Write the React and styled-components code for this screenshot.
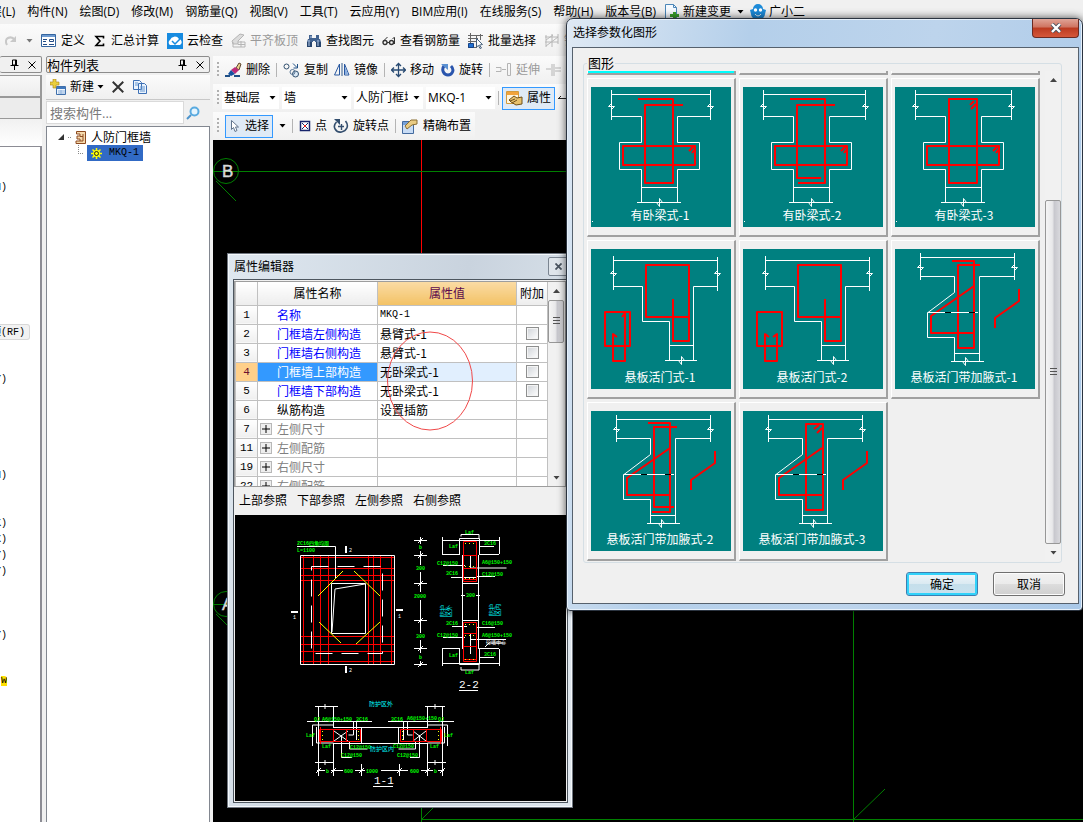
import React from "react";
import styled, { createGlobalStyle } from "styled-components";

const ui = '"Open Sans", "Noto Sans CJK SC", sans-serif';
const song = '"Noto Sans CJK SC", "Liberation Sans", sans-serif';
const mono = '"Liberation Mono", "Noto Sans CJK SC", monospace';

const GlobalStyle = createGlobalStyle`
  * {
    box-sizing: border-box;
  }
  body {
    margin: 0;
    background: #f0f0f0;
    color: #000;
    font-family: ${ui};
    font-size: 12px;
    line-height: 16px;
  }
  button, input, select {
    font: inherit;
    color: inherit;
  }
`;

/* ---------- shell ---------- */

const Screen = styled.div`
  position: relative;
  display: flex;
  flex-direction: column;
  min-height: 100vh;
  overflow: hidden;
`;
const MenuBar = styled.nav`
  display: flex;
  align-items: center;
  gap: 12px;
  height: 24px;
  margin-left: -10px;
  white-space: nowrap;
  overflow: hidden;
`;
const MenuTail = styled.div`
  display: flex;
  align-items: center;
  gap: 6px;
  margin-left: -4px;
`;
const MenuItem = styled.button`
  display: flex;
  align-items: center;
  gap: 3px;
  flex: none;
  padding: 0;
  border: 0;
  background: none;
`;
const ToolBar = styled.div`
  display: flex;
  align-items: center;
  gap: ${(p) => p.$gap || 8}px;
  height: ${(p) => p.$height || 28}px;
  padding: 0 4px;
  flex: none;
  align-self: ${(p) => (p.$fit ? "flex-start" : "stretch")};
  white-space: nowrap;
  overflow: hidden;
  background: linear-gradient(#fbfbfb, #f0f0f0);
`;
const MainTools = styled(ToolBar)`
  height: 32px;
  padding: 2px 4px 0;
`;
const ToolButton = styled.button`
  display: flex;
  align-items: center;
  gap: ${(p) => p.$gap || 4}px;
  flex: none;
  height: 23px;
  padding: ${(p) => (p.$active ? "0 3px" : "0")};
  border: ${(p) => (p.$active ? "1px solid #3399ff" : "0")};
  background: ${(p) => (p.$active ? "#dfeaf6" : "none")};
  color: ${(p) => (p.$dim ? "#9a9a9a" : "#000")};
`;
const Separator = styled.span`
  width: 1px;
  height: 14px;
  flex: none;
  background: #b4b4b4;
`;
const Grip = styled.span`
  width: 2px;
  height: 16px;
  flex: none;
  background: repeating-linear-gradient(#b0b0b0 0 2px, transparent 2px 4px);
`;
const Workspace = styled.div`
  display: flex;
  flex: 1;
`;

/* ---------- left panes ---------- */

const LeftPane = styled.aside`
  display: flex;
  flex-direction: column;
  width: 42px;
  margin-right: 4px;
  flex: none;
`;
const PaneHeader = styled.div`
  display: flex;
  align-items: center;
  height: 17px;
  margin-bottom: 2px;
  border: 1px solid #8c8c8c;
  border-left: ${(p) => (p.$cut ? "0" : "1px solid #8c8c8c")};
  border-radius: 2px;
  font-family: ${song};
`;
const PaneTitle = styled.h2`
  margin: 0;
  flex: 1;
  overflow: hidden;
  font-size: 13px;
  line-height: 14px;
  font-weight: 400;
  white-space: nowrap;
`;
const IconButton = styled.button`
  display: grid;
  place-items: center;
  width: 18px;
  height: 15px;
  padding: 0;
  border: 0;
  background: none;
`;
const PaneTab = styled.button`
  height: 22px;
  border: 1px solid #999;
  border-width: 1px 2px 1px 0;
  background: ${(p) => (p.$pressed ? "#ececec" : "linear-gradient(#f8f8f8, #ededed)")};
`;
const PaneGap = styled.div`
  height: 27px;
  background: linear-gradient(#f1f1f1, #fff);
`;
const ShortcutList = styled.ul`
  flex: 1;
  margin: 0;
  padding: 33px 0 0;
  list-style: none;
  border: 2px solid #8c8c94;
  border-width: 1px 2px 0 0;
  background: #fff;
  font-family: ${mono};
`;
const Shortcut = styled.li`
  display: flex;
  justify-content: flex-end;
  width: ${(p) => (p.$boxed ? 30 : 7)}px;
  height: 16px;
  overflow: hidden;
  line-height: 15px;
  font-size: 10px;
  white-space: nowrap;
  padding-right: ${(p) => (p.$boxed ? 4 : 0)}px;
  border: ${(p) => (p.$boxed ? "1px solid #d8d8d8" : "0")};
  border-left: 0;
  border-radius: 0 3px 3px 0;
  background: ${(p) => (p.$boxed ? "#f2f2f2" : "none")};
`;
const Marked = styled.mark`
  height: 10px;
  line-height: 9px;
  background: #ffe000;
`;
const ListPane = styled.aside`
  display: flex;
  flex-direction: column;
  width: 164px;
  margin-right: 3px;
  flex: none;
`;
const SearchRow = styled.form`
  display: flex;
  align-items: center;
  height: 26px;
  margin-bottom: 1px;
  border-top: 1px solid #c8c8c8;
`;
const SearchInput = styled.input`
  width: 138px;
  height: 23px;
  padding: 0 3px;
  border: 1px solid #dadada;
  outline: 0;
  background: #fff;
  font-size: 13px;
  &::placeholder {
    color: #7a7a7a;
  }
`;
const Tree = styled.ul`
  flex: 1;
  margin: 0;
  padding: 2px 0 0;
  list-style: none;
  border: 1px solid #828790;
  border-bottom: 0;
  background: #fff;
  font-family: ${song};
`;
const TreeRow = styled.li`
  display: flex;
  align-items: center;
  height: 16px;
  gap: 4px;
  padding-left: ${(p) => p.$indent}px;
`;
const TreeDots = styled.span`
  width: ${(p) => p.$width}px;
  border-bottom: 1px dotted #888;
  border-left: ${(p) => (p.$elbow ? "1px dotted #888" : "0")};
  height: ${(p) => (p.$elbow ? 9 : 1)}px;
  align-self: ${(p) => (p.$elbow ? "flex-start" : "center")};
`;
const Selected = styled.span`
  display: flex;
  align-items: center;
  gap: 7px;
  height: 16px;
  padding: 0 4px;
  background: #316ac5;
  font-family: ${mono};
  font-size: 10px;
`;

/* ---------- drawing area ---------- */

const Main = styled.main`
  display: flex;
  flex-direction: column;
  flex: 1;
  min-width: 0;
`;
const Combo = styled.span`
  display: grid;
  align-items: center;
  width: ${(p) => p.$width}px;
  height: 22px;
  flex: none;
  background: #fff;
  & > * {
    grid-area: 1 / 1;
  }
  & > svg {
    justify-self: end;
    margin-right: 3px;
    pointer-events: none;
  }
`;
const ComboSelect = styled.select`
  width: 100%;
  height: 22px;
  padding: 0 15px 0 2px;
  border: 0;
  outline: 0;
  appearance: none;
  background: none;
`;
const Canvas = styled.div`
  flex: 1;
  overflow: hidden;
  background: #000;
  & > svg {
    display: block;
  }
`;

/* ---------- property window ---------- */

const PropertyWindow = styled.section`
  position: absolute;
  left: 227px;
  top: 253px;
  width: 346px;
  padding: 0 4px 4px 5px;
  border: 1px solid #6f7680;
  background: linear-gradient(100deg, #dfe8f0, #c9d3de 55%, #e0e8ef);
  box-shadow: inset 0 0 0 1px #f4f8fb;
`;
const TitleRow = styled.header`
  display: flex;
  align-items: center;
  justify-content: space-between;
  height: ${(p) => p.$height}px;
`;
const WindowTitle = styled.h1`
  margin: 0 1px;
  font-size: 12px;
  font-weight: 400;
`;
const SmallClose = styled.button`
  display: grid;
  place-items: center;
  width: 20px;
  height: 19px;
  padding: 0;
  border: 1px solid #7b8591;
  border-radius: 2px;
  background: #dfe5eb;
`;
const PropertyBody = styled.div`
  padding: 1px;
  border: 1px solid #4d565f;
  background: #f0f0f0;
`;
const TableArea = styled.div`
  position: relative;
  display: flex;
  height: 206px;
  margin-left: -1px;
  border: 1px solid #9d9d9d;
  overflow: hidden;
`;
const Grid = styled.table`
  table-layout: fixed;
  width: 312px;
  border-collapse: collapse;
  flex: none;
  align-self: flex-start;
  background: #fff;
  font-family: ${song};
`;
const HeadCell = styled.th`
  height: 23px;
  padding: 0;
  border: 1px solid #c0c0c0;
  border-top: 0;
  font-weight: 400;
  color: ${(p) => (p.$hot ? "#5c0a4d" : "#000")};
  background: ${(p) => (p.$hot ? "linear-gradient(#fadba4, #f3c265)" : "linear-gradient(#fff, #ededed)")};
`;
const Cell = styled.td`
  height: 19px;
  padding: 0 0 0 2px;
  border: 1px solid #c0c0c0;
  line-height: 16px;
  white-space: nowrap;
  background: ${(p) => (p.$current ? "#e1effe" : "#fff")};
`;
const LatinValue = styled.span`
  display: block;
  font-family: ${mono};
  font-size: 10px;
`;
const NumberCell = styled(Cell)`
  padding: 0;
  text-align: center;
  font-family: ${mono};
  font-size: 11px;
  color: ${(p) => (p.$current ? "#6b1030" : "#000")};
  background: ${(p) => (p.$current ? "#ffd08a" : "linear-gradient(#fff, #efefef)")};
`;
const NameCell = styled(Cell)`
  color: ${(p) => (p.$current ? "#fff" : p.$tone)};
  background: ${(p) => (p.$current ? "#3399ff" : "#fff")};
`;
const NameInner = styled.span`
  display: flex;
  align-items: center;
  gap: 5px;
  height: 16px;
  padding-left: ${(p) => (p.$group ? 0 : 17)}px;
`;
const Expander = styled.button`
  display: grid;
  place-items: center;
  width: 12px;
  height: 12px;
  padding: 0;
  border: 1px solid #b8b8b8;
  background: #eee;
`;
const CheckCell = styled(Cell)`
  padding: 0;
  text-align: center;
  background: #fff;
`;
const Tick = styled.input`
  display: block;
  width: 13px;
  height: 13px;
  margin: 0 auto;
  appearance: none;
  border: 1px solid #8e8f8f;
  background: linear-gradient(135deg, #cfd3d8, #fff);
  box-shadow: inset 0 0 0 1px #f4f4f4;
`;
const RefBar = styled.div`
  display: flex;
  align-items: center;
  gap: 10px;
  height: 28px;
  padding: 0 4px;
`;
const RefButton = styled.button`
  padding: 0;
  border: 0;
  background: none;
`;
const Drawing = styled.div`
  height: 286px;
  background: #000;
  overflow: hidden;
`;
const Ring = styled.svg`
  position: absolute;
  left: 151px;
  top: 49px;
  pointer-events: none;
`;

/* ---------- scroll bar ---------- */

const ScrollTrack = styled.div`
  display: flex;
  flex-direction: column;
  width: 16px;
  flex: none;
  background: #f1f1f1;
`;
const ScrollArrow = styled.button`
  display: grid;
  place-items: center;
  height: 17px;
  padding: 0;
  border: 0;
  flex: none;
  background: none;
`;
const ScrollSpace = styled.div`
  flex: ${(p) => p.$grow};
`;
const ScrollThumb = styled.div`
  display: grid;
  place-items: center;
  flex: ${(p) => p.$grow};
  border: 1px solid #979797;
  border-radius: 2px;
  background: linear-gradient(90deg, #f5f5f5, #e8e8ea 45%, #c8c8ce 60%, #d9d9dd);
`;

/* ---------- shape dialog ---------- */

const Dialog = styled.section`
  position: absolute;
  left: 566px;
  right: 0;
  top: 18px;
  padding: 0 3px 6px 5px;
  border: 1px solid #2b3440;
  border-radius: 7px 7px 4px 4px;
  background: linear-gradient(100deg, #dfe9f4, #b4cfea 30%, #bdd4ec 60%, #a9c8e8);
  box-shadow: 0 0 9px rgba(0, 0, 0, 0.7), inset 0 0 0 1px #e6f0fa;
`;
const RedClose = styled.button`
  display: grid;
  place-items: center;
  align-self: flex-start;
  width: 47px;
  height: 19px;
  padding: 0;
  border: 1px solid #6b2a22;
  border-top: 0;
  border-radius: 0 0 4px 4px;
  background: linear-gradient(#e0a497, #cf7461 45%, #bb3a20 50%, #d5573a);
`;
const DialogBody = styled.div`
  display: flex;
  flex-direction: column;
  padding: 7px 16px 7px 10px;
  border: 1px solid #56616d;
  background: #f0f0f0;
`;
const ShapeGroup = styled.fieldset`
  display: flex;
  min-width: 0;
  margin: 0;
  padding: 0 0 1px 3px;
  border: 1px solid #d5dfe5;
  border-radius: 3px;
  font-family: ${song};
  legend {
    padding: 0 1px;
    font-size: 13px;
    line-height: 16px;
  }
`;
const ShapeScroller = styled.div`
  display: flex;
  width: 100%;
  justify-content: space-between;
`;
const ShapeGrid = styled.div`
  display: grid;
  grid-template-columns: repeat(3, 149px);
  gap: 3px;
  align-content: end;
  height: 490px;
  overflow: hidden;
`;
const ShapeCard = styled.button`
  height: 159px;
  padding: 7px 3px;
  border: 1px solid #fff;
  border-width: 1px 2px 2px 1px;
  border-color: #fff #a0a0a0 #a0a0a0 #fff;
  background: ${(p) => (p.$chosen ? "#00ffff" : "#f0f0f0")};
  svg {
    display: block;
    background: #008080;
  }
`;
const Actions = styled.footer`
  display: flex;
  justify-content: flex-end;
  gap: 15px;
  padding: 9px 0 0;
  margin-right: -3px;
`;
const ActionButton = styled.button`
  width: 72px;
  height: 24px;
  padding: 0;
  border: 1px solid ${(p) => (p.$primary ? "#3c7fb1" : "#707070")};
  border-radius: 3px;
  background: ${(p) =>
    p.$primary
      ? "linear-gradient(#f0f6f9, #dbeaf2 48%, #c5dfeb 50%, #c9e1ee)"
      : "linear-gradient(#f2f2f2, #ebebeb 48%, #dddddd 50%, #cfcfcf)"};
  box-shadow: ${(p) => (p.$primary ? "inset 0 0 0 2px #31d2fa" : "inset 0 0 0 1px #fcfcfc")};
  font-family: ${song};
`;

/* ---------- icons ---------- */

function Svg({ w = 16, h = 16, children }) {
  return (
    <svg width={w} height={h} viewBox={`0 0 ${w} ${h}`} fill="none" aria-hidden="true">
      {children}
    </svg>
  );
}

const Caret = ({ color = "#000" }) => (
  <Svg w={7} h={4}>
    <path d="M0.5 0h6L3.5 3.5z" fill={color} />
  </Svg>
);
const CaretUp = () => (
  <Svg w={7} h={4}>
    <path d="M0 4h7L3.5 0z" fill="#444" />
  </Svg>
);
const Pin = () => (
  <Svg w={9} h={11}>
    <path d="M2.5 1h4v5h-4zM5.5 1v5M0.5 6.5h8M4.5 7v4" stroke="#000" />
  </Svg>
);
const Cross = ({ size = 8, width = 1, color = "#000" }) => (
  <svg width={size} height={size} viewBox="0 0 8 8" aria-hidden="true">
    <path d="M0.5 0.5l7 7M7.5 0.5l-7 7" stroke={color} strokeWidth={width} />
  </svg>
);

const icons = {
  redo: (
    <Svg w={14}>
      <path d="M3 12C-1 5 7 2 11 7" stroke="#c8c8c8" strokeWidth="2" />
      <path d="M12 3v6H6z" fill="#c8c8c8" />
    </Svg>
  ),
  define: (
    <Svg>
      <path d="M0.5 1.5h14v12h-14z" fill="#fff" stroke="#35659f" />
      <path d="M1 2h13v2H1z" fill="#6d9ad0" />
      <path d="M2 6.500h4M2 8.500h3M2 11.500h4M8.500 6.500h4v2h-4zM8 11.500h5" stroke="#234c86" />
    </Svg>
  ),
  sigma: (
    <Svg w={14}>
      <path d="M10.500 5.500V3.500H3L7 8l-4 4.500h7.500v-2" stroke="#000" strokeWidth="1.600" />
    </Svg>
  ),
  cloud: (
    <Svg>
      <path d="M0 0h16v16H0z" fill="#178be0" />
      <path d="M3 12a3 3 0 010-5 5 5 0 019-1 3.2 3.2 0 011 6z" fill="#fff" />
      <path d="M5 8l3 3 5-5" stroke="#178be0" strokeWidth="1.5" />
    </Svg>
  ),
  slab: (
    <Svg w={15}>
      <path d="M1 8l8-7 4 1-6 6v3H2z" fill="#dcdcdc" stroke="#b5b5b5" />
      <path d="M2 9v5h12M7 9h7v5M10 8v6M7 11.500h7" stroke="#b5b5b5" />
    </Svg>
  ),
  find: (
    <Svg>
      <path d="M3 2h3v4H3zM10 2h3v4h-3zM2 6h5v3H1zM9 6h5l1 3H9zM6 5h4v3H6z" fill="#42628f" />
      <path d="M1 9h5v5H1zM10 9h5v5h-5z" fill="#26446d" />
      <path d="M3 7v6M12 7v6M5 3v2" stroke="#b8cdec" />
    </Svg>
  ),
  glasses: (
    <Svg w={14}>
      <circle cx="3" cy="9.500" r="2" stroke="#333" strokeWidth="1.400" />
      <circle cx="9.500" cy="9.500" r="2" stroke="#333" strokeWidth="1.400" />
      <path d="M1.500 8l4-4M12.500 11V4.500l-2 1M5 9.500h3" stroke="#333" />
    </Svg>
  ),
  batch: (
    <Svg>
      <path d="M0 2.500h15M0 5.500h10M0 8.500h8M0 14.500h9M2.500 0v10M8.500 2v6M12.500 1v6" stroke="#666" />
      <path d="M0.500 10.500h5v4h-5z" fill="#1f6fd0" stroke="#174488" />
      <path d="M8.500 5.500l6 6-3 .5 2 3-1.500.5-1.500-3-2 1.500z" fill="#fff" stroke="#48627e" />
    </Svg>
  ),
  net: (
    <Svg>
      <path d="M1 4h13M1 9h13M2 2v12M8 1v13M14 1v10M2 13l12-9M2 7l7-5" stroke="#b8b8b8" />
    </Svg>
  ),
  erase: (
    <Svg w={17}>
      <path d="M11 6l3-5 2 1-2 6z" fill="#ecd08b" stroke="#5c4630" />
      <path d="M6 8l4-3 4 3-4 4z" fill="#bd2c79" />
      <path d="M6 8l4 4-4 2-3-2z" fill="#1752a0" />
      <path d="M0 14h5M9 14h6" stroke="#1e4f86" strokeWidth="2" />
    </Svg>
  ),
  copy: (
    <Svg w={17}>
      <circle cx="3.500" cy="4.500" r="2.500" stroke="#31506f" />
      <circle cx="12.500" cy="12" r="3" fill="#dae9f6" stroke="#31506f" />
      <circle cx="9.500" cy="10" r="2.500" stroke="#5a7797" />
      <path d="M10 1.500l4 4M14.500 2v4h-4" stroke="#205186" />
    </Svg>
  ),
  mirror: (
    <Svg>
      <path d="M5.500 2v11H0.500zM10.500 2v11h4.500z" stroke="#2958a0" />
      <path d="M11 5v7h3z" fill="#89aee0" />
      <path d="M8 1v13" stroke="#355c8c" />
    </Svg>
  ),
  move: (
    <Svg w={15}>
      <path d="M7.500 2v12M1 8h13M5 4l2.500-2.500L10 4M5 12l2.500 2.500L10 12M3 5.500L0.500 8 3 10.500M12 5.500L14.500 8 12 10.500" stroke="#294b73" strokeWidth="1.3" />
    </Svg>
  ),
  rotate: (
    <Svg w={15}>
      <path d="M4 4c-3 4 0 9 4 9s7-5 3-9" stroke="#2a55ad" strokeWidth="3" />
      <path d="M1 2h7v6z" fill="#5b91d2" />
    </Svg>
  ),
  extend: (
    <Svg>
      <path d="M0 5.500h5v4H0M6 7.500h4M11.500 1.500h3v12h-3z" stroke="#b4b4b4" />
    </Svg>
  ),
  trim: (
    <Svg>
      <path d="M0 7h5M6 2v12M8 2v12M9 6h6M9 9h6" stroke="#b4b4b4" />
    </Svg>
  ),
  property: (
    <Svg w={17}>
      <path d="M0.500 1.500h12v12H0.500z" fill="#fff6df" stroke="#d29b3d" />
      <path d="M1 2h11v3H1z" fill="#f2a33b" />
      <path d="M3 10l5-4 3 2 5-1v7l-6 1-5-3z" fill="#e8c16c" stroke="#6f501b" />
      <path d="M4 11l5-2M6 13l5-3" stroke="#6f501b" />
    </Svg>
  ),
  arrowBar: (
    <Svg w={9}>
      <path d="M0 8.500h9M3 6L0.500 8.500M8.500 4v4" stroke="#222" />
    </Svg>
  ),
  cursor: (
    <Svg w={12}>
      <path d="M2.500 2.500v9l2-2 1.500 4 2-1-1.500-3.500h3z" fill="#fff" stroke="#61758d" />
    </Svg>
  ),
  point: (
    <Svg w={12} h={12}>
      <path d="M1.500 1.500h9v9h-9z" fill="#fff" stroke="#17246b" strokeWidth="1.500" />
      <path d="M3 3l6 6M9 3l-6 6" stroke="#17246b" />
      <path d="M5 5h2v2H5z" fill="#e02020" />
    </Svg>
  ),
  rotatePoint: (
    <Svg>
      <path d="M3.500 4c-5 5 0 11 5 10 5-1 8-6 4-11" stroke="#334e6e" strokeWidth="1.600" />
      <path d="M1 1h6v6z" fill="#334e6e" />
      <path d="M5 8.500h6M8.500 6v6" stroke="#334e6e" strokeWidth="1.400" />
    </Svg>
  ),
  place: (
    <Svg w={17}>
      <path d="M0.500 3.500h11v12h-11z" fill="#c8dcf5" stroke="#436a9e" />
      <path d="M1 4h10v3H1z" fill="#77a1d8" />
      <path d="M3 8l6-6 6 0v4l-5 1-5 4z" fill="#e9cb83" stroke="#8b6e33" />
    </Svg>
  ),
  create: (
    <Svg w={17}>
      <path d="M6.500 7.500h9v8h-9z" fill="#eef5fd" stroke="#3f6fab" />
      <path d="M7 8h8v2H7z" fill="#3f78bd" />
      <path d="M8 12h7M8 14h7M11 11v4" stroke="#8fb2dc" />
      <path d="M3 0h3v3h3v3H6v3H3V6H0V3h3z" fill="#e9ce3d" stroke="#a8851d" strokeWidth="0.600" />
    </Svg>
  ),
  copies: (
    <Svg>
      <path d="M1.500 1.500h6l2 2v7h-8zM6.500 4.500h6l2 2v8h-8z" fill="#eaf3fd" stroke="#3d70b5" />
      <path d="M8 8h5M8 10h5M8 12h5M3 4h3M3 6h3" stroke="#6797d0" />
    </Svg>
  ),
  search: (
    <Svg w={14} h={14}>
      <circle cx="8.500" cy="5.500" r="4" fill="#e6f5fe" stroke="#5aabe0" strokeWidth="2" />
      <path d="M5 9l-4 4" stroke="#4d94cc" strokeWidth="2" />
    </Svg>
  ),
  frame: (
    <Svg w={12} h={13}>
      <path d="M1.500 0.500h9v12H1V10h4V8H2V5h3V3H1.500z" fill="#f5d9ac" stroke="#8d4a20" />
      <path d="M5 5.500h3M8 3v7M5 10h3" stroke="#8d4a20" />
    </Svg>
  ),
  gear: (
    <Svg w={11} h={11}>
      <path d="M5.500 0v11M0 5.500h11M1.500 1.500l8 8M9.500 1.500l-8 8" stroke="#ffff00" strokeWidth="1.500" />
      <circle cx="5.500" cy="5.500" r="3.500" fill="#ff0" />
      <circle cx="5.500" cy="5.500" r="2" stroke="#222" />
    </Svg>
  ),
  change: (
    <Svg>
      <path d="M1.500 0.500h8l3 3v11h-11z" fill="#f5faff" stroke="#4b86b8" />
      <path d="M9.500 0.500v3h3" stroke="#4b86b8" />
      <path d="M9 8h3v2h3v3h-3v3H9v-3H6v-3h3z" fill="#3aa12c" />
    </Svg>
  ),
  face: (
    <Svg>
      <path d="M0 6l3-1a5 5 0 0110 0l3 1-1 4a7 6 0 01-14 0z" fill="#1c8ad8" />
      <circle cx="5.500" cy="6" r="1.700" fill="#fff" />
      <circle cx="10.500" cy="6" r="1.700" fill="#fff" />
      <path d="M5 10c2 2.500 4 2.500 6 0" stroke="#fff" />
    </Svg>
  ),
};

/* ---------- shape thumbnails ---------- */

function Breaks({ left, right, y, bx, by }) {
  return (
    <path
      d={`M${left} ${y - 3}l-3 3h6l-3 3M${right} ${y - 3}l-3 3h6l-3 3M${bx - 3} ${by}l3 4v-8l3 4`}
      stroke="#fff"
    />
  );
}

function BeamShape({ right, red }) {
  return (
    <>
      <path
        d={`M20.500 3v30M${right} 3v30M20.500 7.500H${right}M20.500 29.500h30v26h-22v27h22v33M${right} 29.500H86.500v26h22v27h-22v33M50.500 100.500h36M46 115.500h44`}
        stroke="#fff"
      />
      <Breaks left={20.5} right={right} y={19.5} bx={68.5} by={115.5} />
      <path d={`M32 59h72v19H32zM98 64l5-5M101 66l3-4${red}`} stroke="#f00" strokeWidth="2" />
      <path d="M1 134.500h1" stroke="#fff" />
    </>
  );
}

function DoorShape({ red }) {
  return (
    <>
      <path
        d="M22.500 7v34M126.500 8v34M22.500 11.500h104M22.500 37.500h29v35h27v39M126.500 37.500h-24v74M78.500 96.500h24M74 111.500h32"
        stroke="#fff"
      />
      <Breaks left={22.5} right={126.5} y={24.5} bx={90.5} by={111.5} />
      <path d={`M55 16h43v52H55zM82 50v42h16V68M14 63h25v34H14z${red}`} stroke="#f00" strokeWidth="2" />
    </>
  );
}

function HaunchShape({ red }) {
  return (
    <>
      <path
        d="M25.500 4v27M119.500 4v27M25.500 8.500h94M25.500 27.500h34v16L33 63.500h-0.500v25h27v24M119.500 27.500h-35v85M59.500 104.500h25M56 112.500h33"
        stroke="#fff"
      />
      <Breaks left={25.5} right={119.5} y={18.5} bx={70.5} by={112.5} />
      <path d={`M79 37L36 67v17h43M124 40v12l-24 17v10${red}`} stroke="#f00" strokeWidth="2" />
      <path d="M33 63.500h50" stroke="#fff" />
      <path d="M50 63.500h6M74 63.500h6" stroke="#000" />
    </>
  );
}

const shapes = [
  { name: "有卧梁式-1", art: <BeamShape right={119.5} red="M47 12h35v84H54V18h38" /> },
  { name: "有卧梁式-2", art: <BeamShape right={122.5} red="M47 12h35v84H55M92 18H54v73h24" /> },
  { name: "有卧梁式-3", art: <BeamShape right={116.5} red="M54 12h28v84H54zM79 14l-4 4M81 17l-5 5" /> },
  { name: "悬板活门式-1", art: <DoorShape red="M26 88l-4-3v27h12V64l-3 4" /> },
  { name: "悬板活门式-2", art: <DoorShape red="M26 88l-4-3v27h12V85l-4 3" /> },
  { name: "悬板活门带加腋式-1", art: <HaunchShape red="M57 12h22v87H63V16h22" /> },
  { name: "悬板活门带加腋式-2", art: <HaunchShape red="M57 12h22v89H61M86 16H63v80h20" /> },
  { name: "悬板活门带加腋式-3", art: <HaunchShape red="M63 13h17v86H63zM76 14l-5 4M79 17l-5 5" /> },
];

function Shape({ name, art }) {
  return (
    <ShapeCard>
      <svg width="140" height="140" viewBox="0 0 140 140" fill="none" strokeLinejoin="round">
        {art}
        <text x="69" y="133" textAnchor="middle" fontSize="12" fill="#fff">
          {name}
        </text>
      </svg>
    </ShapeCard>
  );
}

/* ---------- reinforcement drawing ---------- */

const cadLabels = [
  [62, 30, "2C16四角均周"],
  [62, 37, "L=1100"],
  [184, 34, "b"],
  [181, 55, "300"],
  [179, 83, "2000"],
  [181, 123, "300"],
  [184, 144, "b"],
  [230, 19, "Laf"],
  [214, 33, "Laf"],
  [249, 30, "3C16"],
  [202, 50, "C12@150"],
  [247, 49, "A6@150+150"],
  [211, 60, "3C16"],
  [247, 61, "C12@150"],
  [231, 82, "300"],
  [211, 110, "3C16"],
  [247, 110, "C16@150"],
  [202, 122, "C12@150"],
  [247, 122, "A6@150+150"],
  [214, 142, "Laf"],
  [249, 141, "3C16"],
  [230, 159, "Laf"],
  [79, 206, "QJ"],
  [87, 206, "A6@150+150"],
  [121, 206, "3C16"],
  [156, 206, "3C16"],
  [172, 205, "A6@150+150"],
  [203, 206, "QJ"],
  [71, 222, "Laf"],
  [87, 233, "Laf"],
  [195, 233, "Laf"],
  [209, 222, "Laf"],
  [115, 234, "C12@150"],
  [106, 242, "C12@150"],
  [158, 233, "C12@150"],
  [162, 242, "C12@150"],
  [91, 258, "b"],
  [109, 258, "600"],
  [131, 258, "1000"],
  [175, 258, "600"],
  [199, 258, "b"],
];

function ReinforcementDrawing() {
  return (
    <svg width="332" height="286" viewBox="0 0 332 286" fill="none" fontFamily={mono} fontSize="5">
      {/* elevation */}
      <path
        d="M66 42.500h93M66 53.500h93M66 60.500h93M66 65.500h93M66 121.500h93M66 129.500h93M66 136.500h93M66 146.500h93M68.500 41v108M78.500 41v108M85.500 41v108M93.500 41v108M133.500 41v108M138.500 41v108M145.500 41v108M156.500 41v108"
        stroke="#f00"
      />
      <path d="M65.500 40.500h94v109h-94zM96.500 68.500h34v50h-34zM130 69l-30 5-3 43M62 31.500h38.500V63" stroke="#fff" />
      <path d="M76.500 51.500h71v87h-71z" stroke="#fff" strokeDasharray="17 9" />
      <path d="M83 81l25-25M119 56l26 25M84 107l22 21M121 129l24-22" stroke="#ff0" />
      <path d="M111 31v7M111 151v7M56 97h7M161 95h7" stroke="#fff" strokeWidth="2" />
      {/* height chain */}
      <path
        d="M185.500 22v7M185.500 36v14M185.500 57v20M185.500 85v33M185.500 125v13M185.500 146v5M179 25.500h13M179 40.500h13M179 68.500h13M179 105.500h13M179 133.500h13M179 149.500h13M183 28l5-5M183 43l5-5M183 71l5-5M183 108l5-5M183 136l5-5M183 152l5-5"
        stroke="#fff"
      />
      {/* section 2-2 */}
      <path
        d="M227.500 40v94M243.500 40v94M207.500 22v17M264.500 22v17M207 25.500h57M207 39.500h18M244 39.500h20M224.500 39.500v-16h20v16M226 21.500v-2h18v4M227 68.500h16M227 105.500h16M207 133.500h18M244 133.500h20M207.500 134v17M264.500 134v17M207 148.500h57M224.500 133.500v16h20v-16M226 152v3h18v-5M226 80.500h4M241 80.500h4M208 50.500h22M235.500 40v13h36M216 62.500h25M241 61.500h19M217 111.500h15M241 112.500h19M208 122.500h22M235.500 118v21M235 124.500h36M245 31.500h14M245 142.500h14M250 132l4-4h16"
        stroke="#fff"
      />
      <path
        d="M228.500 26.500h13v40h-13zM228 40.500h13M228 53.500h13M228 64.500h13M228.500 107.500h13v39h-13zM228 118.500h13M228 131.500h13M228 144.500h13"
        stroke="#f00"
      />
      <path
        d="M230 28.500h11M230 51.500h11M230 63.500h11M230 109.500h11M230 120.500h11M230 144.500h11"
        stroke="#ff0"
        strokeDasharray="1 3"
      />
      {/* section 1-1 */}
      <path
        d="M98 212.500h95M98 228.500h95M126.500 212v16M126.500 249v12M163.500 212v16M164.500 249v12M99 216l14 10M113 216l-14 10M178 216l13 10M191 216l-13 10M83.500 191v70M98.500 191v22M98.500 228v33M192.500 191v22M192.500 228v33M207.500 191v70M80 191.500h23M190 191.500h20M80 247.500h19M192 247.500h19M82 255.500h8M96 255.500h12M120 255.500h10M146 255.500h27M186 255.500h12M203 255.500h6M72 206.500h65M153 206.500h66M77.500 231v-21h21M81.500 212v16h17M212.500 231v-21h-20M209.500 212v16h-17M106.500 220v22.500H117M114.500 226v8h18M184.500 220v22.500H175M180.500 226v8h-17M118.500 207v13h-5M172.500 207v13h5M121.500 207v18M168.500 207v18"
        stroke="#fff"
      />
      <path d="M81 258l5-5M96 258l5-5M124 258l5-5M162 258l5-5M190 258l5-5M205 258l5-5M90 189v5M200 189v5M90 245v5M200 245v5" stroke="#fff" />
      <path
        d="M84.500 214.500h41v12h-41zM165.500 214.500h41v12h-41zM85.500 212v17M205.500 212v17M98.500 214v13M111.500 214v13M178.500 214v13M191.500 214v13"
        stroke="#f00"
      />
      <path d="M87.500 216v10M123.500 216v10M167.500 216v10M203.500 216v10" stroke="#ff0" strokeDasharray="1 3" />
      <path d="M138 271.500h20M224 175.500h19" stroke="#fff" />
      <g fill="#00ff00" fontWeight="700">
        {cadLabels.map(([x, y, text]) => (
          <text key={`${x}-${y}`} x={x} y={y}>
            {text}
          </text>
        ))}
      </g>
      <g fill="#fff">
        <text x="114" y="37">2</text>
        <text x="114" y="157">2</text>
        <text x="58" y="104">1</text>
        <text x="163" y="103">1</text>
        <text x="251" y="129">砼墙中心</text>
        <text x="224" y="173" fontSize="11">2-2</text>
        <text x="139" y="269" fontSize="11">1-1</text>
      </g>
      <g fill="#00ffff" fontSize="6">
        <text x="134" y="191">防护区外</text>
        <text x="135" y="236">防护区内</text>
        <text transform="translate(210 102) rotate(-90)">防护</text>
        <text transform="translate(216 102) rotate(-90)">区外</text>
        <text transform="translate(259 101) rotate(-90)">防护</text>
        <text transform="translate(265 101) rotate(-90)">区内</text>
      </g>
    </svg>
  );
}

/* ---------- data ---------- */

const menus = [
  "层(L)", "构件(N)", "绘图(D)", "修改(M)", "钢筋量(Q)", "视图(V)", "工具(T)",
  "云应用(Y)", "BIM应用(I)", "在线服务(S)", "帮助(H)", "版本号(B)",
];

const mainTools = [
  ["define", "定义"],
  ["sigma", "汇总计算"],
  ["cloud", "云检查"],
  ["slab", "平齐板顶", true],
  ["find", "查找图元"],
  ["glasses", "查看钢筋量"],
  ["batch", "批量选择"],
  ["net", "锁定", true],
];

const properties = [
  { no: 1, name: "名称", value: "MKQ-1", tone: "#0000ff" },
  { no: 2, name: "门框墙左侧构造", value: "悬臂式-1", tone: "#0000ff", check: true },
  { no: 3, name: "门框墙右侧构造", value: "悬臂式-1", tone: "#0000ff", check: true },
  { no: 4, name: "门框墙上部构造", value: "无卧梁式-1", tone: "#0000ff", check: true, current: true },
  { no: 5, name: "门框墙下部构造", value: "无卧梁式-1", tone: "#0000ff", check: true },
  { no: 6, name: "纵筋构造", value: "设置插筋", tone: "#000" },
  { no: 7, name: "左侧尺寸", tone: "#808080", group: true },
  { no: 11, name: "左侧配筋", tone: "#808080", group: true },
  { no: 19, name: "右侧尺寸", tone: "#808080", group: true },
  { no: 22, name: "右侧配筋", tone: "#808080", group: true },
];

// one entry per 16px line of the module tree
const shortcuts = [
  "N)", "", "", "", "", "", "", "", "", "顶(RF)", "", "", "Y)", "", "", "", "", "", "N)",
  "", "", "K)", "X)", "Y)", "Y)", "", "", "", "Y)", "", "", "w",
];

/* ---------- components ---------- */

function Tool({ icon, label, dim, active }) {
  return (
    <ToolButton $dim={dim} $active={active}>
      {icons[icon]}
      {label}
    </ToolButton>
  );
}

function ComboBox({ label, width, value }) {
  return (
    <Combo $width={width}>
      <ComboSelect aria-label={label} defaultValue={value}>
        <option>{value}</option>
      </ComboSelect>
      <Caret />
    </Combo>
  );
}

function ScrollBar({ before, thumb, after }) {
  return (
    <ScrollTrack>
      <ScrollArrow aria-label="向上滚动">
        <CaretUp />
      </ScrollArrow>
      <ScrollSpace $grow={before} />
      <ScrollThumb $grow={thumb}>
        <Svg w={7} h={8}>
          <path d="M0 0.500h7M0 3.500h7M0 6.500h7" stroke="#555" />
        </Svg>
      </ScrollThumb>
      <ScrollSpace $grow={after} />
      <ScrollArrow aria-label="向下滚动">
        <Caret color="#444" />
      </ScrollArrow>
    </ScrollTrack>
  );
}

function PaneButtons() {
  return (
    <>
      <IconButton aria-label="固定">
        <Pin />
      </IconButton>
      <IconButton aria-label="关闭">
        <Cross />
      </IconButton>
    </>
  );
}

function ModulePane() {
  return (
    <LeftPane>
      <PaneHeader $cut>
        <PaneTitle />
        <PaneButtons />
      </PaneHeader>
      <PaneTab aria-label="工程设置" />
      <PaneTab $pressed aria-label="绘图输入" />
      <PaneGap />
      <ShortcutList>
        {shortcuts.map((text, i) => (
          <Shortcut key={i} $boxed={text.length > 2}>
            {text === "w" ? <Marked>w</Marked> : text}
          </Shortcut>
        ))}
      </ShortcutList>
    </LeftPane>
  );
}

function ComponentPane() {
  return (
    <ListPane>
      <PaneHeader>
        <PaneTitle>构件列表</PaneTitle>
        <PaneButtons />
      </PaneHeader>
      <ToolBar $height={24}>
        <ToolButton $gap={3}>
          {icons.create}
          新建
          <Caret />
        </ToolButton>
        <ToolButton aria-label="删除构件">
          <Cross size={12} width={1.3} color="#333" />
        </ToolButton>
        <ToolButton aria-label="复制构件">{icons.copies}</ToolButton>
      </ToolBar>
      <SearchRow>
        <SearchInput aria-label="搜索构件" placeholder="搜索构件..." />
        <IconButton type="button" aria-label="搜索">
          {icons.search}
        </IconButton>
      </SearchRow>
      <Tree>
        <TreeRow $indent={10}>
          <Svg w={7} h={7}>
            <path d="M7 0v6H1z" fill="#333" />
          </Svg>
          <TreeDots $width={3} />
          {icons.frame}
          人防门框墙
        </TreeRow>
        <TreeRow $indent={31}>
          <TreeDots $width={5} $elbow />
          <Selected>
            {icons.gear}
            MKQ-1
          </Selected>
        </TreeRow>
      </Tree>
    </ListPane>
  );
}

function DrawingPane() {
  return (
    <Main>
      <ToolBar $gap={6}>
        <Grip />
        <Tool icon="erase" label="删除" />
        <Separator />
        <Tool icon="copy" label="复制" />
        <Tool icon="mirror" label="镜像" />
        <Separator />
        <Tool icon="move" label="移动" />
        <Tool icon="rotate" label="旋转" />
        <Separator />
        <Tool icon="extend" label="延伸" dim />
        <Tool icon="trim" label="修剪" dim />
      </ToolBar>
      <ToolBar $gap={3}>
        <Grip />
        <ComboBox label="楼层" width={57} value="基础层" />
        <ComboBox label="构件类型" width={69} value="墙" />
        <ComboBox label="构件类别" width={69} value="人防门框墙" />
        <ComboBox label="构件名称" width={69} value="MKQ-1" />
        <Separator />
        <Tool icon="property" label="属性" active />
        <Tool icon="arrowBar" label="" />
      </ToolBar>
      <ToolBar $gap={6} $fit>
        <Grip />
        <Tool icon="cursor" label="选择" active />
        <Caret />
        <Separator />
        <Tool icon="point" label="点" />
        <Tool icon="rotatePoint" label="旋转点" />
        <Separator />
        <Tool icon="place" label="精确布置" />
      </ToolBar>
      <Canvas>
        <svg width="870" height="682" viewBox="0 0 870 682" fill="none">
          <path d="M208.500 0v464" stroke="#f00" />
          <path
            d="M208.500 464v218M640.500 464v218M0 31.500h870M0 464.500h14M208 679.500h662M3 41l20 20M3 474l20 20M640 680l32-31M208 680l12-12"
            stroke="#008000"
          />
          <circle cx="13" cy="31" r="12.500" stroke="#008000" />
          <circle cx="13" cy="464" r="12.500" stroke="#008000" />
          <g fill="#d8d8d8" stroke="#d8d8d8" strokeWidth="0.500" fontSize="17" fontFamily="Liberation Sans, sans-serif">
            <text x="9" y="37">B</text>
            <text x="9" y="470">A</text>
          </g>
        </svg>
      </Canvas>
    </Main>
  );
}

function PropertyEditor() {
  return (
    <PropertyWindow>
      <TitleRow $height={25}>
        <WindowTitle>属性编辑器</WindowTitle>
        <SmallClose aria-label="关闭属性编辑器">
          <Cross size={7} width={2} color="#4a5460" />
        </SmallClose>
      </TitleRow>
      <PropertyBody>
        <TableArea>
          <Grid>
            <colgroup>
              <col width="22" />
              <col width="120" />
              <col width="139" />
              <col width="31" />
            </colgroup>
            <thead>
              <tr>
                <HeadCell />
                <HeadCell>属性名称</HeadCell>
                <HeadCell $hot>属性值</HeadCell>
                <HeadCell>附加</HeadCell>
              </tr>
            </thead>
            <tbody>
              {properties.map((row) => (
                <tr key={row.no}>
                  <NumberCell $current={row.current}>{row.no}</NumberCell>
                  <NameCell $current={row.current} $tone={row.tone}>
                    <NameInner $group={row.group}>
                      {row.group && (
                        <Expander aria-label={`展开${row.name}`}>
                          <Svg w={8} h={8}>
                            <path d="M0 4h8M4 0v8" stroke="#000" />
                          </Svg>
                        </Expander>
                      )}
                      {row.name}
                    </NameInner>
                  </NameCell>
                  <Cell $current={row.current}>
                    {row.no === 1 ? <LatinValue>{row.value}</LatinValue> : row.value}
                  </Cell>
                  <CheckCell>
                    {row.check && <Tick type="checkbox" aria-label={`附加${row.name}`} />}
                  </CheckCell>
                </tr>
              ))}
            </tbody>
          </Grid>
          <ScrollBar before={1} thumb={42} after={129} />
          <Ring width="88" height="100" viewBox="0 0 88 100" fill="none">
            <ellipse cx="44" cy="50" rx="42.500" ry="49" stroke="#f04848" />
          </Ring>
        </TableArea>
        <RefBar>
          <RefButton>上部参照</RefButton>
          <RefButton>下部参照</RefButton>
          <RefButton>左侧参照</RefButton>
          <RefButton>右侧参照</RefButton>
        </RefBar>
        <Drawing>
          <ReinforcementDrawing />
        </Drawing>
      </PropertyBody>
    </PropertyWindow>
  );
}

function ShapeDialog() {
  return (
    <Dialog role="dialog" aria-label="选择参数化图形">
      <TitleRow $height={28}>
        <WindowTitle>选择参数化图形</WindowTitle>
        <RedClose aria-label="关闭">
          <svg width="12" height="10" viewBox="0 0 12 10" aria-hidden="true">
            <path d="M2 1l8 8M10 1L2 9" stroke="#4a4f5c" strokeWidth="4" />
            <path d="M2 1l8 8M10 1L2 9" stroke="#fff" strokeWidth="2.400" />
          </svg>
        </RedClose>
      </TitleRow>
      <DialogBody>
        <ShapeGroup>
          <legend>图形</legend>
          <ShapeScroller>
            <ShapeGrid>
              <ShapeCard $chosen aria-label="无卧梁式-1" />
              <ShapeCard aria-label="无卧梁式-2" />
              <ShapeCard aria-label="无卧梁式-3" />
              {shapes.map((shape) => (
                <Shape key={shape.name} {...shape} />
              ))}
            </ShapeGrid>
            <ScrollBar before={112} thumb={344} after={0} />
          </ShapeScroller>
        </ShapeGroup>
        <Actions>
          <ActionButton $primary>确定</ActionButton>
          <ActionButton>取消</ActionButton>
        </Actions>
      </DialogBody>
    </Dialog>
  );
}

export default function App() {
  return (
    <Screen>
      <GlobalStyle />
      <MenuBar>
        {menus.map((item) => (
          <MenuItem key={item}>{item}</MenuItem>
        ))}
        <MenuTail>
          <MenuItem>
            {icons.change}
            新建变更
          </MenuItem>
          <MenuItem aria-label="更多变更">
            <Caret />
          </MenuItem>
          <MenuItem>
            {icons.face}
            广小二
          </MenuItem>
        </MenuTail>
      </MenuBar>
      <MainTools>
        <ToolButton aria-label="重做" $dim $gap={8}>
          {icons.redo}
          <Caret color="#777" />
        </ToolButton>
        {mainTools.map(([icon, label, dim]) => (
          <Tool key={icon} icon={icon} label={label} dim={dim} />
        ))}
      </MainTools>
      <Workspace>
        <ModulePane />
        <ComponentPane />
        <DrawingPane />
      </Workspace>
      <PropertyEditor />
      <ShapeDialog />
    </Screen>
  );
}
